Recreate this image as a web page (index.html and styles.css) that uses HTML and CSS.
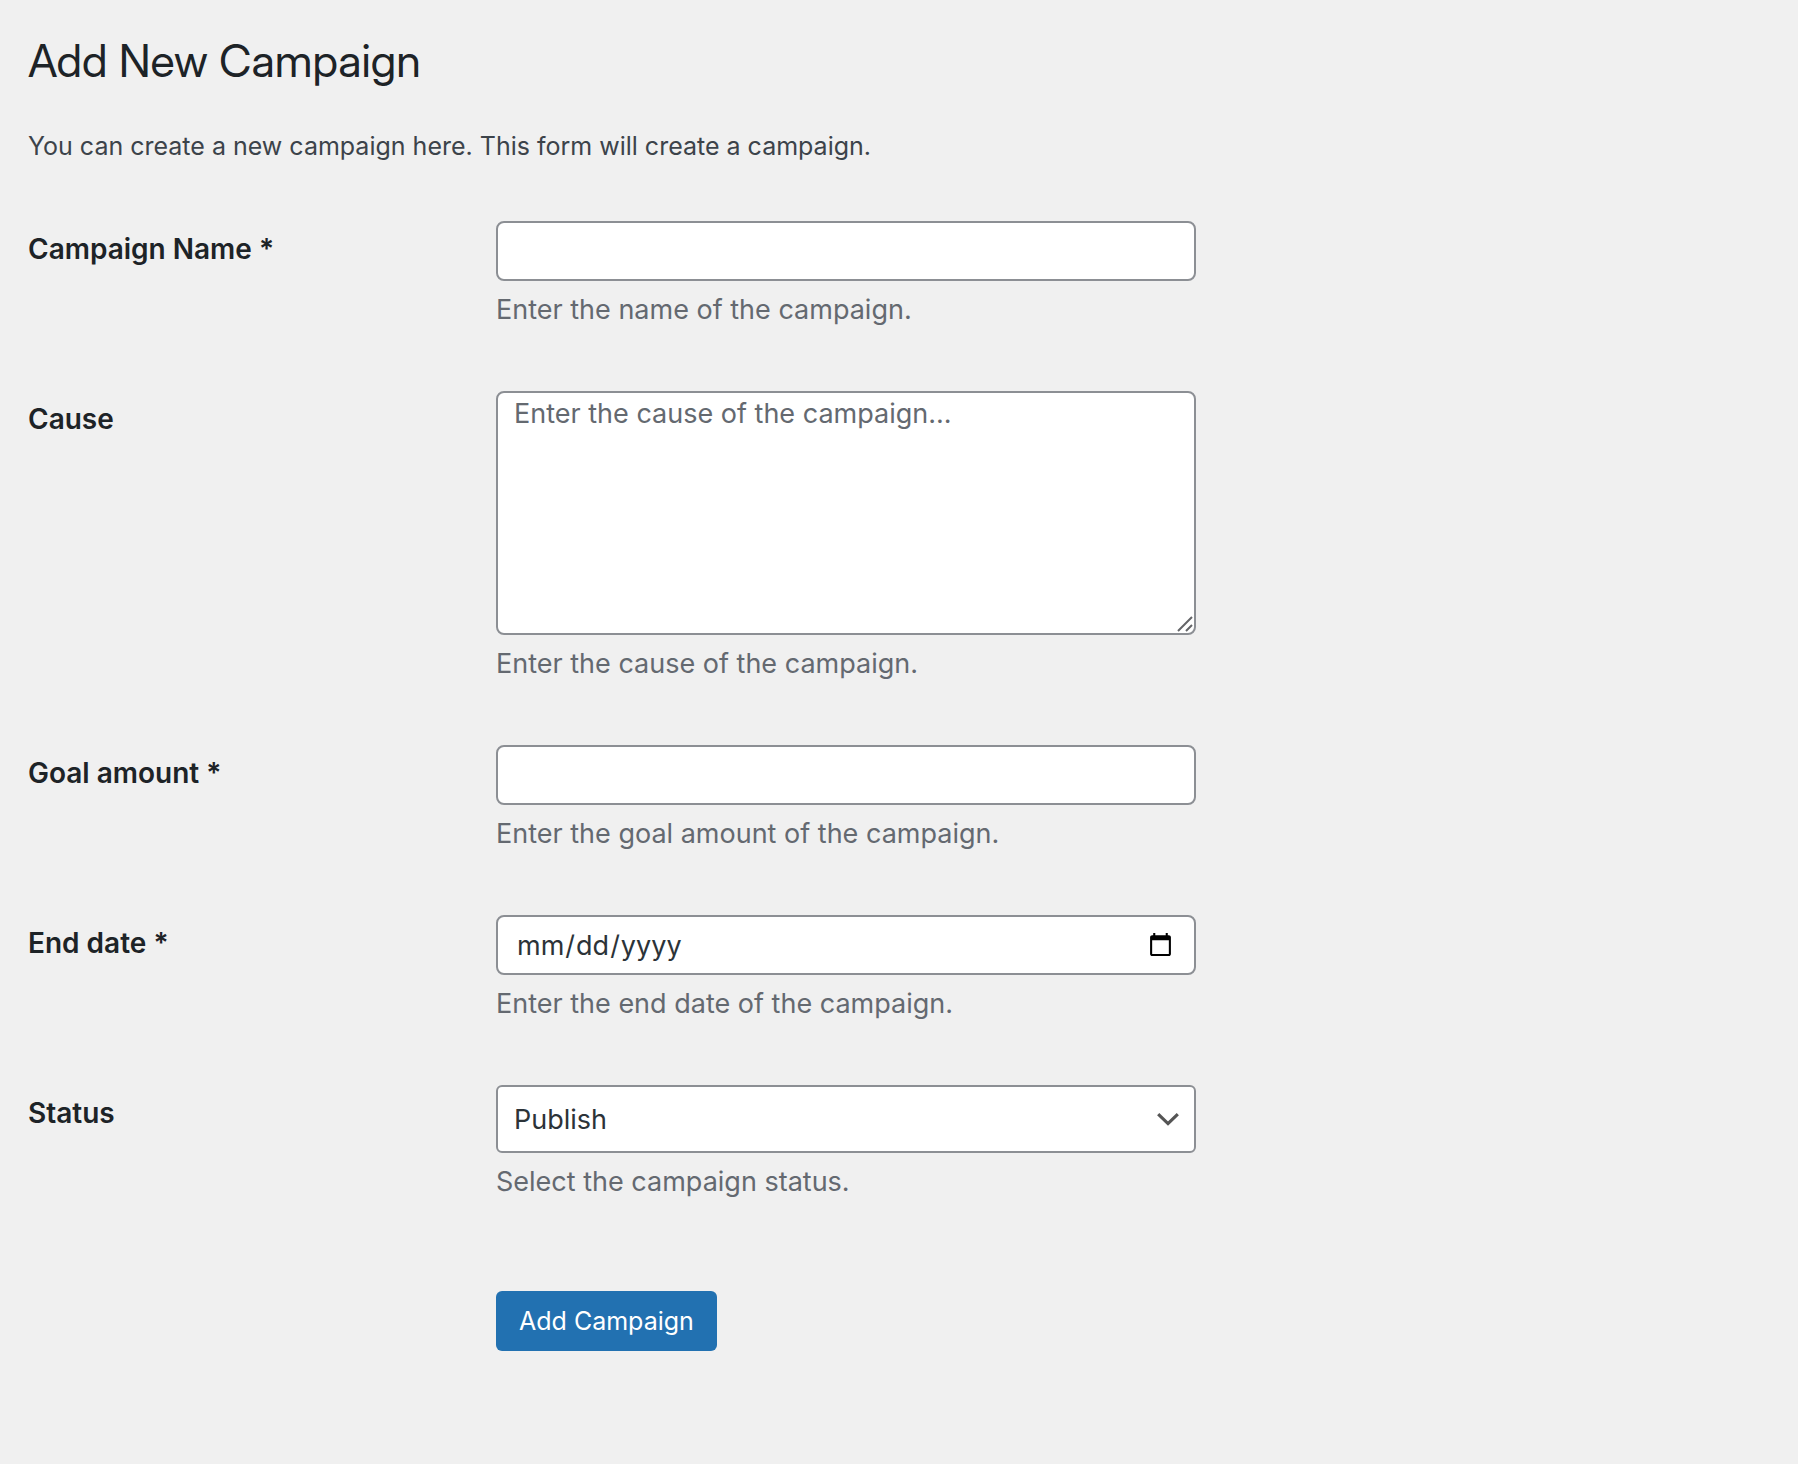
FILE: index.html
```html
<!DOCTYPE html>
<html lang="en">
<head>
<meta charset="utf-8">
<meta name="viewport" content="width=device-width, initial-scale=1">
<title>Add New Campaign</title>
<link rel="stylesheet" href="styles.css">
</head>
<body>
<main class="wrap">
  <h1 class="title">Add New Campaign</h1>
  <p class="intro">You can create a new campaign here. This form will create a campaign.</p>

  <form class="form">
    <div class="row">
      <label class="label" for="name">Campaign Name *</label>
      <div class="field">
        <input class="control" type="text" id="name" aria-describedby="name-help">
        <p class="help" id="name-help">Enter the name of the campaign.</p>
      </div>
    </div>

    <div class="row">
      <label class="label" for="cause">Cause</label>
      <div class="field">
        <div class="stack">
          <textarea class="control area" id="cause" placeholder="Enter the cause of the campaign..." aria-describedby="cause-help"></textarea>
          <svg class="grip" width="16" height="16" viewBox="0 0 16 16" aria-hidden="true"><path d="M1 15 15 1M9 15l6-6" fill="none" stroke="#646568" stroke-width="2"/></svg>
        </div>
        <p class="help" id="cause-help">Enter the cause of the campaign.</p>
      </div>
    </div>

    <div class="row">
      <label class="label" for="goal">Goal amount *</label>
      <div class="field">
        <input class="control" type="text" inputmode="decimal" id="goal" aria-describedby="goal-help">
        <p class="help" id="goal-help">Enter the goal amount of the campaign.</p>
      </div>
    </div>

    <div class="row">
      <label class="label" for="end">End date *</label>
      <div class="field">
        <input class="control date" type="date" id="end" aria-describedby="end-help">
        <p class="help" id="end-help">Enter the end date of the campaign.</p>
      </div>
    </div>

    <div class="row">
      <label class="label" for="status">Status</label>
      <div class="field">
        <div class="stack">
          <select class="control select" id="status" aria-describedby="status-help">
            <option>Publish</option>
            <option>Draft</option>
          </select>
          <svg class="chevron" width="22" height="13" viewBox="0 0 22 13" aria-hidden="true"><path d="M1.200 1.200 11 10.600l9.800-9.400" fill="none" stroke="#555" stroke-width="3.200"/></svg>
        </div>
        <p class="help" id="status-help">Select the campaign status.</p>
      </div>
    </div>

    <div class="actions">
      <button class="button" type="submit">Add Campaign</button>
    </div>
  </form>
</main>
</body>
</html>
```
FILE: styles.css
```css
* {
  box-sizing: border-box;
}

body {
  margin: 0;
  background: #f0f0f0;
  color: #3c434a;
  font-family: Inter, "Liberation Sans", sans-serif;
  font-size: 25px;
}

.wrap {
  padding: 31px 28px 60px;
}

.title {
  margin: 0;
  color: #1d2327;
  font-family: "Inter Display", Inter, "Liberation Sans", sans-serif;
  font-size: 45px;
  font-weight: 400;
  line-height: 60px;
}

.intro {
  margin: 35px 0 25px;
  line-height: 40px;
}

.row {
  display: grid;
  grid-template-columns: 468px minmax(0, 700px);
  padding: 30px 0;
}

.label {
  padding-top: 10px;
  color: #1d2327;
  font-size: 28px;
  font-weight: 600;
  line-height: 36px;
}

.control {
  display: block;
  width: 100%;
  height: 60px;
  margin: 0;
  padding: 0 16px;
  border: 2px solid #8c8f94;
  border-radius: 8px;
  background: #fff;
  color: #2c3338;
  font-family: inherit;
  font-size: 27px;
}

.area {
  height: 244px;
  line-height: 42px;
  resize: none;
}

.area::placeholder {
  color: #646970;
}

.date {
  padding: 0 18px;
}

.select {
  height: 68px;
  border-radius: 6px;
  appearance: none;
}

.stack {
  display: grid;
}

.stack > * {
  grid-area: 1 / 1;
}

.grip {
  place-self: end;
  margin: 0 3px 3px 0;
  pointer-events: none;
}

.chevron {
  place-self: center end;
  margin-right: 17px;
  pointer-events: none;
}

.help {
  margin: 8px 0 0;
  color: #646970;
  font-size: 27px;
  line-height: 42px;
}

.actions {
  padding: 58px 0 30px 468px;
}

.button {
  height: 60px;
  padding: 0 23px;
  border: 0;
  border-radius: 6px;
  background: #2271b1;
  color: #fff;
  font-family: inherit;
  font-size: 25px;
}
```
